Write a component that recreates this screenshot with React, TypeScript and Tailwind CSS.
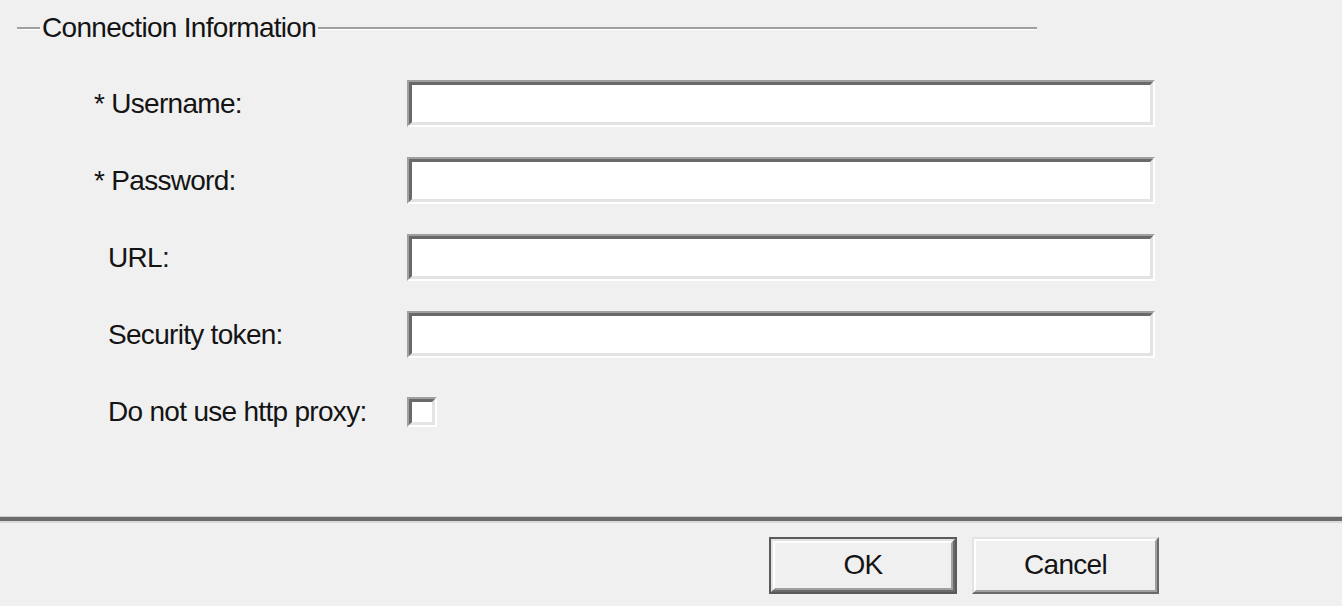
const font = { fontFamily: '"Liberation Sans", Arial, sans-serif' };

function Sunken({ className }: { className: string }) {
  return (
    <div
      className={`border-2 border-t-[#a0a0a0] border-l-[#a0a0a0] border-b-white border-r-white ${className}`}
    >
      <div className="h-full w-full border-[3px] border-t-[#696969] border-l-[#696969] border-b-[#e3e3e3] border-r-[#e3e3e3] bg-white" />
    </div>
  );
}

function FieldRow({
  label,
  required,
  children,
}: {
  label: string;
  required?: boolean;
  children: React.ReactNode;
}) {
  return (
    <div className="flex h-[47px] items-center">
      <div className={`w-[407px] ${required ? "pl-[94px]" : "pl-[108px]"}`}>
        {required ? "* " : ""}
        {label}
      </div>
      {children}
    </div>
  );
}

function Button({ label, isDefault }: { label: string; isDefault?: boolean }) {
  const face = (
    <div className="flex h-full w-full border-[2px] border-t-[#e3e3e3] border-l-[#e3e3e3] border-b-[#696969] border-r-[#696969]">
      <div className="flex h-full w-full items-center justify-center border-[2px] border-t-white border-l-white border-b-[#a0a0a0] border-r-[#a0a0a0] bg-[#f0f0f0] pb-[2px]">
        {label}
      </div>
    </div>
  );
  return isDefault ? (
    <div className="h-[57px] w-[188px] border-[2px] border-[#5a5a5a]">{face}</div>
  ) : (
    <div className="h-[57px] w-[187px]">{face}</div>
  );
}

export default function App() {
  return (
    <div
      className="flex h-[606px] w-full flex-col overflow-hidden bg-[#f0f0f0] text-[28px] leading-[32px] tracking-[-0.7px] text-[#141414]"
      style={font}
    >
      <div className="ml-[17px] mt-[12px] flex w-[1020px] items-center">
        <div className="h-[3px] w-[23px] border-t-2 border-b border-t-[#a0a0a0] border-b-white" />
        <span className="px-[2px]">Connection Information</span>
        <div className="h-[3px] flex-1 border-t-2 border-b border-t-[#a0a0a0] border-b-white" />
      </div>

      <div className="mt-[36px] flex flex-col gap-[30px]">
        <FieldRow label="Username:" required>
          <Sunken className="h-[47px] w-[748px]" />
        </FieldRow>
        <FieldRow label="Password:" required>
          <Sunken className="h-[47px] w-[748px]" />
        </FieldRow>
        <FieldRow label="URL:">
          <Sunken className="h-[47px] w-[748px]" />
        </FieldRow>
        <FieldRow label="Security token:">
          <Sunken className="h-[47px] w-[748px]" />
        </FieldRow>
        <FieldRow label="Do not use http proxy:">
          <Sunken className="h-[30px] w-[30px]" />
        </FieldRow>
      </div>

      <div className="mt-auto h-[7px] w-full border-t border-b-2 border-t-[#cfcfcf] border-b-[#dadada] bg-[#6b6b6b]" />
      <div className="flex justify-end gap-[15px] pb-[12px] pr-[183px] pt-[14px]">
        <Button label="OK" isDefault />
        <Button label="Cancel" />
      </div>
    </div>
  );
}
